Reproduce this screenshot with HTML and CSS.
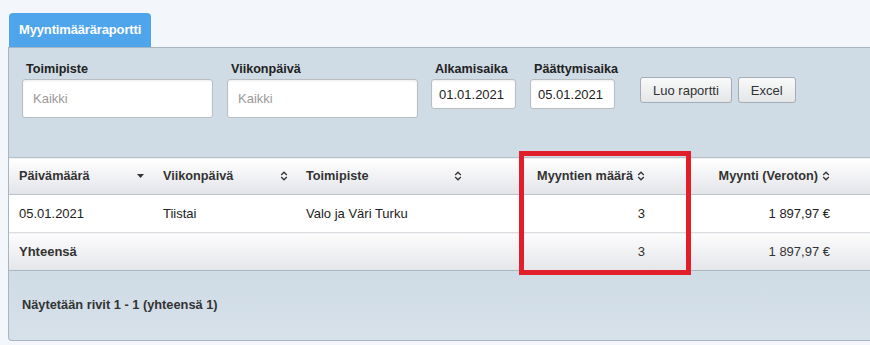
FILE: index.html
```html
<!DOCTYPE html>
<html lang="fi">
<head>
<meta charset="utf-8">
<title>Myyntimääräraportti</title>
<link rel="stylesheet" href="styles.css">
</head>
<body>
<div class="page">
  <div class="tabs">
    <div class="tab">Myyntimääräraportti</div>
  </div>
  <div class="panel">
    <div class="filters">
      <div class="field">
        <label class="label">Toimipiste</label>
        <input class="input wide" type="text" placeholder="Kaikki">
      </div>
      <div class="field">
        <label class="label">Viikonpäivä</label>
        <input class="input wide" type="text" placeholder="Kaikki">
      </div>
      <div class="field">
        <label class="label">Alkamisaika</label>
        <input class="input date" type="text" value="01.01.2021">
      </div>
      <div class="field">
        <label class="label">Päättymisaika</label>
        <input class="input date" type="text" value="05.01.2021">
      </div>
      <div class="actions">
        <button class="btn">Luo raportti</button>
        <button class="btn">Excel</button>
      </div>
    </div>
    <table class="grid">
      <colgroup>
        <col class="c1"><col class="c2"><col class="c3"><col class="c4"><col class="c5"><col class="c6">
      </colgroup>
      <thead>
        <tr>
          <th><div class="th-l"><span>Päivämäärä</span><svg class="caret" viewBox="0 0 7 4"><polygon points="0,0 7,0 3.5,4"/></svg></div></th>
          <th><div class="th-l"><span>Viikonpäivä</span><svg class="sort" viewBox="0 0 8 10"><path d="M1.2 4 L4 1.2 L6.8 4 M1.2 6 L4 8.8 L6.8 6"/></svg></div></th>
          <th><div class="th-l"><span>Toimipiste</span><svg class="sort" viewBox="0 0 8 10"><path d="M1.2 4 L4 1.2 L6.8 4 M1.2 6 L4 8.8 L6.8 6"/></svg></div></th>
          <th><div class="th-r"><span>Myyntien määrä</span><svg class="sort" viewBox="0 0 8 10"><path d="M1.2 4 L4 1.2 L6.8 4 M1.2 6 L4 8.8 L6.8 6"/></svg></div></th>
          <th><div class="th-r"><span>Myynti (Veroton)</span><svg class="sort" viewBox="0 0 8 10"><path d="M1.2 4 L4 1.2 L6.8 4 M1.2 6 L4 8.8 L6.8 6"/></svg></div></th>
          <th></th>
        </tr>
      </thead>
      <tbody>
        <tr class="row">
          <td>05.01.2021</td>
          <td>Tiistai</td>
          <td>Valo ja Väri Turku</td>
          <td class="num">3</td>
          <td class="num">1 897,97 €</td>
          <td></td>
        </tr>
        <tr class="total">
          <td class="strong">Yhteensä</td>
          <td></td>
          <td></td>
          <td class="num">3</td>
          <td class="num">1 897,97 €</td>
          <td></td>
        </tr>
      </tbody>
    </table>
    <div class="footer">Näytetään rivit 1 - 1 (yhteensä 1)</div>
  </div>
</div>
<div class="highlight"></div>
</body>
</html>
```

FILE: styles.css
```css
html, body {
  margin: 0;
  padding: 0;
}
body {
  background: #f3f7fb;
  font-family: "Liberation Sans", Arial, sans-serif;
  font-size: 13px;
  color: #333;
  overflow: hidden;
  width: 870px;
  height: 345px;
  position: relative;
}
.page {
  padding: 13px 0 0 8px;
}
.tabs {
  display: flex;
  padding-left: 1px;
}
.tab {
  background: #4fa5ec;
  color: #fff;
  font-weight: bold;
  font-size: 13px;
  height: 34px;
  line-height: 33px;
  padding: 0 10px;
  border-radius: 4px 4px 0 0;
  letter-spacing: -0.15px;
}
.panel {
  width: 900px;
  background: #cfdbe5;
  border: 1px solid #a9b6c1;
  border-right: none;
  border-bottom-left-radius: 4px;
  box-sizing: border-box;
  height: 294px;
  display: flex;
  flex-direction: column;
}
.filters {
  display: flex;
  align-items: flex-start;
  padding: 14px 0 0 13px;
  height: 109px;
  box-sizing: border-box;
  gap: 14px;
}
.field {
  display: flex;
  flex-direction: column;
}
.label {
  font-weight: bold;
  font-size: 12.6px;
  color: #222;
  line-height: 15px;
  height: 15px;
  padding-left: 4px;
  margin-bottom: 2px;
}
.input {
  font-family: "Liberation Sans", Arial, sans-serif;
  font-size: 13px;
  color: #222;
  background: #fff;
  border: 1px solid #b9bec3;
  border-radius: 3px;
  box-shadow: inset 0 1px 2px rgba(0, 0, 0, 0.08);
  box-sizing: border-box;
  outline: none;
  margin: 0;
}
.input::placeholder {
  color: #9a9a9a;
}
.wide {
  width: 191px;
  height: 39px;
  padding: 0 10px;
}
.date {
  width: 85px;
  height: 30px;
  padding: 0 7px;
}
.field:nth-child(3) {
  margin-left: -1px;
}
.actions {
  display: flex;
  gap: 6px;
  padding-top: 15px;
  margin-left: 8px;
}
.btn {
  font-family: "Liberation Sans", Arial, sans-serif;
  font-size: 13px;
  color: #333;
  height: 26px;
  padding: 0 12px;
  border: 1px solid #a4adb5;
  border-radius: 3px;
  background: linear-gradient(#f9f9f9, #e4e6e8);
  margin: 0;
}
.grid {
  width: 100%;
  border-collapse: collapse;
  table-layout: fixed;
  border-top: 1px solid #b3bfca;
  background: #fff;
}
.c1 { width: 144px; }
.c2 { width: 143px; }
.c3 { width: 174px; }
.c4 { width: 185px; }
.c5 { width: 185px; }
.grid th {
  height: 37px;
  padding: 0 8px 0 10px;
  font-weight: bold;
  font-size: 12.7px;
  text-align: left;
  color: #333;
  background: linear-gradient(#ffffff, #e3e4e9);
  border-bottom: 1px solid #bcc5ce;
  box-sizing: border-box;
}
.th-l {
  display: flex;
  align-items: center;
  justify-content: space-between;
}
.th-r {
  display: flex;
  align-items: center;
  justify-content: flex-end;
  gap: 4px;
  padding-right: 2px;
}
.caret {
  width: 7px;
  height: 4px;
  fill: #333;
  margin-right: 1px;
}
.sort {
  width: 8px;
  height: 10px;
  fill: none;
  stroke: #333;
  stroke-width: 1.3;
}
.grid td {
  height: 37px;
  padding: 0 10px;
  color: #222;
  white-space: nowrap;
  overflow: hidden;
}
.row td {
  background: #fff;
  border-bottom: 1px solid #dcdde0;
}
.total td {
  background: linear-gradient(#fcfcfd, #e5e6ea);
  border-bottom: 1px solid #aab6c1;
  color: #333;
}
.num {
  text-align: right;
}
.strong {
  font-weight: bold;
}
.footer {
  flex: 1;
  display: flex;
  align-items: center;
  padding-left: 13px;
  padding-bottom: 2px;
  font-weight: bold;
  font-size: 12.8px;
  color: #333;
  background: linear-gradient(#cfdbe5, #d6e1ea);
  border-bottom-left-radius: 4px;
}
.highlight {
  position: absolute;
  left: 519px;
  top: 151px;
  width: 172px;
  height: 124px;
  box-sizing: border-box;
  border: 5px solid #e31e2b;
}
```
